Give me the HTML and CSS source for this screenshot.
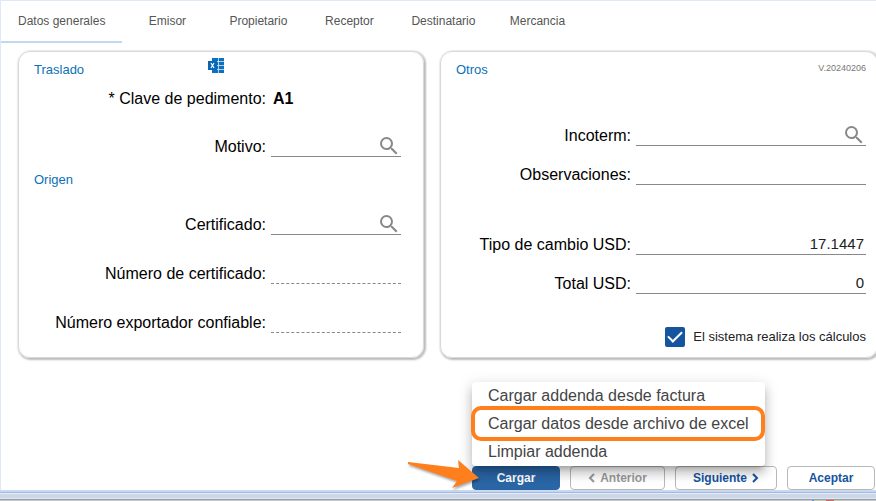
FILE: index.html
```html
<!DOCTYPE html>
<html lang="es">
<head>
<meta charset="utf-8">
<title>Datos generales</title>
<link rel="stylesheet" href="styles.css">
</head>
<body>
<svg class="defs" aria-hidden="true">
  <symbol id="search" viewBox="0 0 24 24"><path d="M15.5 14h-.79l-.28-.27A6.47 6.47 0 0 0 16 9.5 6.5 6.5 0 1 0 9.5 16c1.61 0 3.09-.59 4.23-1.57l.27.28v.79l5 4.99L20.49 19l-4.99-5zm-6 0C7.01 14 5 11.99 5 9.5S7.01 5 9.5 5 14 7.01 14 9.5 11.99 14 9.5 14z"/></symbol>
</svg>
<div class="window">
  <nav class="tabs">
    <a class="tab active" href="#generales">Datos generales</a>
    <a class="tab" href="#emisor">Emisor</a>
    <a class="tab" href="#propietario">Propietario</a>
    <a class="tab" href="#receptor">Receptor</a>
    <a class="tab" href="#destinatario">Destinatario</a>
    <a class="tab" href="#mercancia">Mercancia</a>
  </nav>
  <main class="panels">
    <section class="panel traslado">
      <header class="panel-head">
        <h2>Traslado</h2>
        <button class="icon-btn excel" aria-label="Excel">
          <svg width="16" height="15" viewBox="0 0 16 15"><path fill="#0c72c0" d="M4 0h12v15H4z"/><path stroke="#fff" stroke-opacity=".65" d="M10.500 0v15M9 3.500h7M9 7.500h7M9 11.500h7"/><path fill="#0967b4" d="M0 3h9v9H0z"/><path fill="none" stroke="#fff" stroke-width="1.200" d="M3 5l3 5M6 5l-3 5"/></svg>
        </button>
      </header>
      <div class="row"><span class="label">* Clave de pedimento:</span><strong class="value">A1</strong></div>
      <div class="row spaced"><label for="motivo">Motivo:</label><div class="field"><input id="motivo"><button class="icon-btn" aria-label="Buscar motivo"><svg class="search"><use href="#search"/></svg></button></div></div>
      <h2 class="subhead">Origen</h2>
      <div class="row spaced"><label for="cert">Certificado:</label><div class="field"><input id="cert"><button class="icon-btn" aria-label="Buscar certificado"><svg class="search"><use href="#search"/></svg></button></div></div>
      <div class="row spaced"><label for="numcert">Número de certificado:</label><div class="field dashed"><input id="numcert" disabled></div></div>
      <div class="row spaced"><label for="exportador">Número exportador confiable:</label><div class="field dashed"><input id="exportador" disabled></div></div>
    </section>
    <section class="panel otros">
      <header class="panel-head">
        <h2>Otros</h2>
        <small>V.20240206</small>
      </header>
      <div class="row first"><label for="incoterm">Incoterm:</label><div class="field"><input id="incoterm"><button class="icon-btn" aria-label="Buscar incoterm"><svg class="search"><use href="#search"/></svg></button></div></div>
      <div class="row"><label for="obs">Observaciones:</label><div class="field"><input id="obs"></div></div>
      <div class="row group"><label for="cambio">Tipo de cambio USD:</label><div class="field"><input id="cambio" value="17.1447"></div></div>
      <div class="row"><label for="total">Total USD:</label><div class="field"><input id="total" value="0"></div></div>
      <label class="check"><input type="checkbox" checked>El sistema realiza los cálculos</label>
    </section>
  </main>
  <footer class="actions">
    <div class="load">
      <button class="btn primary">Cargar</button>
      <div class="menu">
        <button class="item">Cargar addenda desde factura</button>
        <button class="item marked">Cargar datos desde archivo de excel</button>
        <button class="item">Limpiar addenda</button>
      </div>
      <svg class="arrow" width="76" height="34" viewBox="0 0 76 34"><path fill="#ff7f1c" d="M3 2L54 8 53 0 74 18 47 28 52 21 3 4z"/></svg>
    </div>
    <button class="btn medium" disabled><svg class="chev" viewBox="0 0 8 10"><path d="M6 1L2 5l4 4"/></svg>Anterior</button>
    <button class="btn wide">Siguiente<svg class="chev" viewBox="0 0 8 10"><path d="M2 1l4 4-4 4"/></svg></button>
    <button class="btn">Aceptar</button>
  </footer>
</div>
<div class="frame"></div>
</body>
</html>
```
FILE: styles.css
```css
* { box-sizing: border-box; }
body {
  margin: 0;
  min-height: 100vh;
  display: flex;
  flex-direction: column;
  font-family: "Liberation Sans", Arial, sans-serif;
  font-size: 16px;
  color: #000;
  background: #fff;
  overflow: hidden;
}
button, input { font: inherit; color: inherit; }
h2 { margin: 0; font-size: 13px; line-height: 18px; font-weight: 400; color: #0b70b8; }
.defs { position: absolute; width: 0; height: 0; }
.window {
  flex: 1;
  display: flex;
  flex-direction: column;
  border-top: 1px solid #dfe7f8;
  border-left: 1px solid #dfe7f8;
}
.tabs { display: flex; }
.tab {
  min-width: 90px;
  height: 42px;
  padding: 0 17px;
  font-size: 12px;
  line-height: 40px;
  text-align: center;
  text-decoration: none;
  color: #555;
  border-bottom: 2px solid transparent;
}
.tab.active { border-color: #c2d7f0; }
.panels {
  display: grid;
  grid-template-columns: 406fr 438fr;
  gap: 16px;
  margin: 8px -2px 0 17px;
}
.panel {
  padding: 9px 22px 10px 15px;
  border: 1px solid #d8d8d8;
  border-radius: 12px;
  box-shadow: 1px 1px 2px 1px #bbb;
}
.otros { padding-right: 11px; }
.panel-head { display: flex; justify-content: space-between; height: 18px; }
.traslado .panel-head { display: grid; grid-template-columns: 174px 1fr; }
.panel-head small { font-size: 9px; line-height: 14px; color: #777; }
.icon-btn { padding: 0; border: 0; background: none; line-height: 0; }
.excel { justify-self: start; align-self: start; margin-top: -3px; }
.search { width: 24px; height: 24px; fill: #888; }
.row {
  display: grid;
  grid-template-columns: 1fr 130px;
  gap: 5px;
  height: 23px;
  margin-top: 7px;
  line-height: 25px;
  text-align: right;
}
.value { padding-left: 2px; text-align: left; }
.row.spaced { margin-top: 26px; }
.row + .row.spaced { margin-top: 25px; }
.subhead { margin-top: 14px; }
.subhead + .row.spaced { margin-top: 23px; }
.spaced + .row.spaced { margin-top: 26px; }
.field { display: flex; height: 23px; border-bottom: 1px solid #888; }
.field input {
  flex: 1;
  min-width: 0;
  width: 100%;
  padding: 1px 2px 0;
  border: 0;
  outline: 0;
  background: none;
  text-align: right;
  font-size: 15px;
  color: #222;
}
.field.dashed { border-bottom-style: dashed; }
.otros .row { grid-template-columns: 1fr 230px; margin-top: 16px; }
.otros .first { margin-top: 44px; }
.otros .group { margin-top: 47px; }
.check {
  display: flex;
  justify-content: flex-end;
  align-items: center;
  gap: 8px;
  margin-top: 33px;
  font-size: 13px;
  line-height: 20px;
  color: #222;
}
.check input {
  appearance: none;
  display: grid;
  place-items: center;
  width: 20px;
  height: 20px;
  margin: 0;
  border: 2px solid #1555a0;
  border-radius: 2px;
}
.check input:checked { background: #1555a0; }
.check input:checked::after {
  content: "";
  width: 12px;
  height: 6px;
  margin-bottom: 4px;
  border: solid #fff;
  border-width: 0 0 2px 2px;
  transform: rotate(-45deg);
}
.actions { display: flex; justify-content: flex-end; gap: 10px; margin-top: auto; padding-right: 1px; }
.btn {
  display: flex;
  justify-content: center;
  align-items: center;
  gap: 4px;
  width: 88px;
  height: 24px;
  padding: 0;
  border: 1px solid #b8b8b8;
  border-radius: 4px;
  background: #fff;
  font-size: 12px;
  font-weight: 700;
  color: #1554a0;
}
.medium { width: 95px; }
.wide { width: 102px; }
.btn:disabled { color: #999; }
.primary { border-color: #2a65a5; background: #2a65a5; color: #fff; }
.chev { width: 8px; height: 10px; fill: none; stroke: currentColor; stroke-width: 2; }
.load { position: relative; }
.menu {
  position: absolute;
  left: 0;
  bottom: 100%;
  border-radius: 4px;
  background: #fff;
  box-shadow: 0 5px 5px -3px #0003, 0 8px 10px 1px #00000024, 0 3px 14px 2px #0000001f;
}
.item {
  display: block;
  width: 100%;
  height: 28px;
  padding: 0 16px;
  border: 0;
  background: none;
  line-height: 28px;
  white-space: nowrap;
  text-align: left;
  color: #444;
}
.marked { position: relative; }
.marked::after {
  content: "";
  position: absolute;
  inset: -4px 0 -3px -1px;
  border: 4px solid #ff7f1c;
  border-radius: 10px;
}
.arrow { position: absolute; left: -67px; top: -6px; filter: drop-shadow(1px 2px 1px #0005); overflow: visible; }
.frame {
  height: 11px;
  background:
    linear-gradient(90deg, #6f8fc8 2px, #c9c8b0 2px 14px, #d0605c 14px 22px, #c9c8b0 22px) right 34px bottom / 30px 1px no-repeat,
    linear-gradient(#c9d9ed 2px, #a3b8ea 2px 3px, #e7edf7 3px 4px, #cdd7e5 4px 8px, #e1e6ed 8px 9px, #909fb3 9px 10px, #c8c8c8 10px);
}
```
